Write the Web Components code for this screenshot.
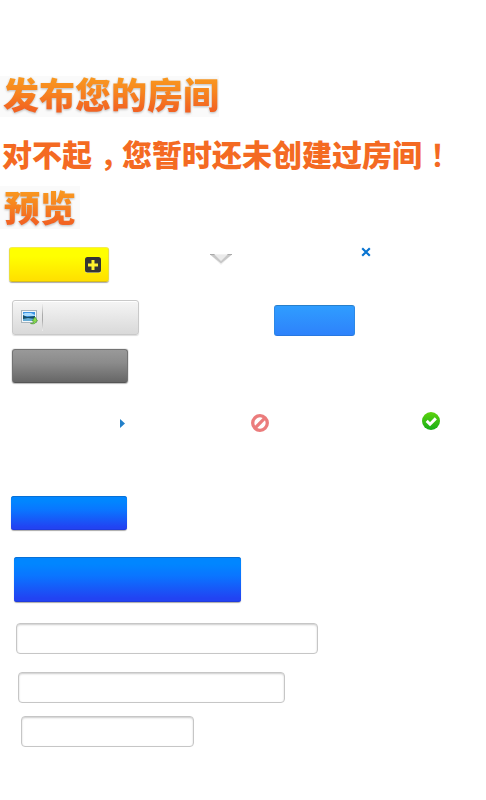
<!DOCTYPE html>
<html lang="zh-CN">
<head>
<meta charset="utf-8">
<title>发布您的房间</title>
<style>
html,body{margin:0;background:#fff}
body{font-family:"Noto Sans CJK SC","Liberation Sans",sans-serif}
</style>
</head>
<body>
<room-sheet></room-sheet>
<script>
function define(name, css, html) {
  customElements.define(name, class extends HTMLElement {
    constructor() {
      super();
      this.attachShadow({mode: 'open'}).innerHTML = '<style>' + css + '</style>' + html;
    }
  });
}

define('sheet-title', `
  :host{display:flow-root;box-sizing:border-box;background:#fafafa;font-weight:900;font-size:36px;white-space:nowrap}
  span{display:block;margin-top:-3px;line-height:41px;color:transparent;background:linear-gradient(#f9981f 12%,#f7861f 45%,#f26322 90%);-webkit-background-clip:text;background-clip:text;filter:drop-shadow(0 1px 1px rgba(90,90,90,.4))}
`, '<span><slot></slot></span>');

define('sheet-notice', `
  :host{display:block;font-weight:900;font-size:30px;line-height:40px;color:#f46a22;white-space:nowrap}
`, '<slot></slot>');

define('sheet-button', `
  :host{display:flex;box-sizing:border-box;align-items:center;border-radius:3px}
  :host([kind=yellow]){width:100px;height:35px;justify-content:flex-end;padding-right:7px;border:1px solid #eadf3c;border-top-color:#f4ed50;border-bottom-color:#d8bd18;background:linear-gradient(#ff0 25%,#ffdf00);box-shadow:0 1px 1px #aaa}
  :host([kind=light]){width:127px;height:35px;border:1px solid #c9c9c9;background:linear-gradient(#f5f5f5,#d9d9d9);box-shadow:0 1px 1px #ddd,inset 0 1px 0 #fff}
  :host([kind=dark]){width:116px;height:34px;border:1px solid #737373;border-bottom-color:#555;background:linear-gradient(#999,#8b8b8b 40%,#666);box-shadow:0 1px 1px #bbb,0 0 0 1px #eee}
  :host([kind=sky]){width:81px;height:31px;border:1px solid #2b88e6;border-top-color:#287fca;border-bottom-color:#2878e0;background:linear-gradient(#2f9dff,#2e82fb)}
  :host([kind=blue]){width:116px;height:34px;background:linear-gradient(#0186ff 15%,#0a75ff 42%,#2243f2 92%);box-shadow:0 1px 1px #aaa,inset 0 1px 0 #0870d6,inset 0 -1px 0 #203bdc}
  :host([wide]){width:227px!important;height:45px!important}
`, '<slot></slot>');

define('sheet-field', `
  :host{display:block}
  input{display:block;box-sizing:border-box;width:100%;height:31px;margin:0;padding:0 8px;border:1px solid #c6c6c6;border-radius:4px;background:#fff;box-shadow:inset 0 1px 2px #ccc;outline:0;font:14px "Liberation Sans",sans-serif}
`, '<input type="text">');

const icons = {
  plus: [16,16,'<rect y="1" width="16" height="15" rx="2.5" fill="#fff8a0"/><rect width="16" height="15.5" rx="2.5" fill="#353535"/><path d="M6.5 3h3v3.500H13v3H9.500V13h-3V9.500H3v-3h3.500z" fill="#fff12e"/>'],
  photo: [17,15,'<rect x=".5" y=".5" width="15" height="12" fill="#f5f8fa" stroke="#a9b4bb"/><path d="M2 2h12v9H2z" fill="#3d94e2"/><path d="M4 3h6l4 2v1H2V4z" fill="#a9dcff"/><path d="M2 5l4 2 8-1v3H2z" fill="#164e68"/><path d="M2 9l5-1 7 1v2H2z" fill="#65abd4"/><path d="M9.500 13.500c3 0 3-1 3.500-2.500h-2l3-4 2.500 4h-1c-.5 2-2 3.500-6 2.500z" fill="#8bdc50" stroke="#4c9b32" stroke-width=".7"/>'],
  chevron: [22,12,'<path d="M0 .5h22L11 11z" fill="#ddd" opacity=".4"/><path d="M4 .5h14l-7 7z" fill="#ebebeb"/><path d="M0 .5h4.500L11 7l6.500-6.500H22L11 9.500z" fill="#c8c8c8"/><path d="M0 .5h4.500M17.500 .5H22" stroke="#aaa"/>'],
  close: [10,10,'<path d="M1.200 1.200l7.600 7.600M8.800 1.200L1.200 8.800" stroke="#0874d1" stroke-width="2.100"/>'],
  arrow: [5,9,'<path d="M0 0l5 4.500L0 9z" fill="#2380c9"/>'],
  ban: [18,18,'<circle cx="9" cy="9" r="7.300" fill="#fff" stroke="#eb7c7c" stroke-width="3.300"/><path d="M4.200 13.800l9.600-9.600" stroke="#eb7c7c" stroke-width="3.300"/>'],
  check: [18,18,'<defs><linearGradient id="g" x2="0" y2="1"><stop stop-color="#5dd30d"/><stop offset="1" stop-color="#17ad18"/></linearGradient></defs><circle cx="9" cy="9" r="9" fill="url(#g)"/><path d="M4.700 8.900l3.300 3.300 5.800-5.800" fill="none" stroke="#fff" stroke-width="3"/>']
};
customElements.define('sheet-icon', class extends HTMLElement {
  connectedCallback() {
    if (this.shadowRoot) return;
    const [w, h, art] = icons[this.getAttribute('name')];
    this.attachShadow({mode: 'open'}).innerHTML =
      `<style>:host{display:block;flex:none}svg{display:block}</style><svg width="${w}" height="${h}" viewBox="0 0 ${w} ${h}">${art}</svg>`;
  }
});

define('room-sheet', `
  :host{display:flex;flex-direction:column;align-items:flex-start;box-sizing:border-box;width:486px;height:800px;padding-top:76px;overflow:hidden;background:#fff}
  .row{display:flex;align-items:flex-start}
  .t1{width:219px;height:41px;padding-left:3px}
  .t2{width:80px;height:43px;padding-left:4px;padding-top:3px}
  sheet-notice{height:40px;margin:16px 0 13px 2px}
  .mark{display:inline-block;box-sizing:border-box;width:30px;padding-left:8px;font-weight:700;font-feature-settings:"halt"}
  .r1{height:53px;padding:18px 0 0 9px}
  .r1 .down{margin:7px 0 0 101px}
  .r1 .x{margin:0 0 0 129px}
  .r2{height:49px;padding-left:12px}
  .r2 .sky{margin:5px 0 0 135px}
  .r2 sheet-icon{margin-left:8px}
  .bar{width:1px;height:27px;margin-left:4px;background:linear-gradient(#eee,#aaa 40%,#aaa 60%,#eee)}
  .dark{margin-left:12px}
  .status{height:20px;padding:29px 0 0 120px}
  .status .a{margin-top:7px}
  .status .b{margin:2px 0 0 126px}
  .status .c{margin-left:153px}
  .b1{margin:64px 0 0 11px}
  .b2{margin:27px 0 0 14px}
  .f1{width:302px;margin:21px 0 0 16px}
  .f2{width:267px;margin:18px 0 0 18px}
  .f3{width:173px;margin:13px 0 0 21px}
`, `
  <sheet-title class="t1">发布您的房间</sheet-title>
  <sheet-notice>对不起<span class="mark">，</span>您暂时还未创建过房间<span class="mark">！</span></sheet-notice>
  <sheet-title class="t2">预览</sheet-title>
  <div class="row r1"><sheet-button kind="yellow"><sheet-icon name="plus"></sheet-icon></sheet-button><sheet-icon class="down" name="chevron"></sheet-icon><sheet-icon class="x" name="close"></sheet-icon></div>
  <div class="row r2"><sheet-button kind="light"><sheet-icon name="photo"></sheet-icon><span class="bar"></span></sheet-button><sheet-button class="sky" kind="sky"></sheet-button></div>
  <sheet-button class="dark" kind="dark"></sheet-button>
  <div class="row status"><sheet-icon class="a" name="arrow"></sheet-icon><sheet-icon class="b" name="ban"></sheet-icon><sheet-icon class="c" name="check"></sheet-icon></div>
  <sheet-button class="b1" kind="blue"></sheet-button>
  <sheet-button class="b2" kind="blue" wide></sheet-button>
  <sheet-field class="f1"></sheet-field>
  <sheet-field class="f2"></sheet-field>
  <sheet-field class="f3"></sheet-field>
`);
</script>
</body>
</html>
